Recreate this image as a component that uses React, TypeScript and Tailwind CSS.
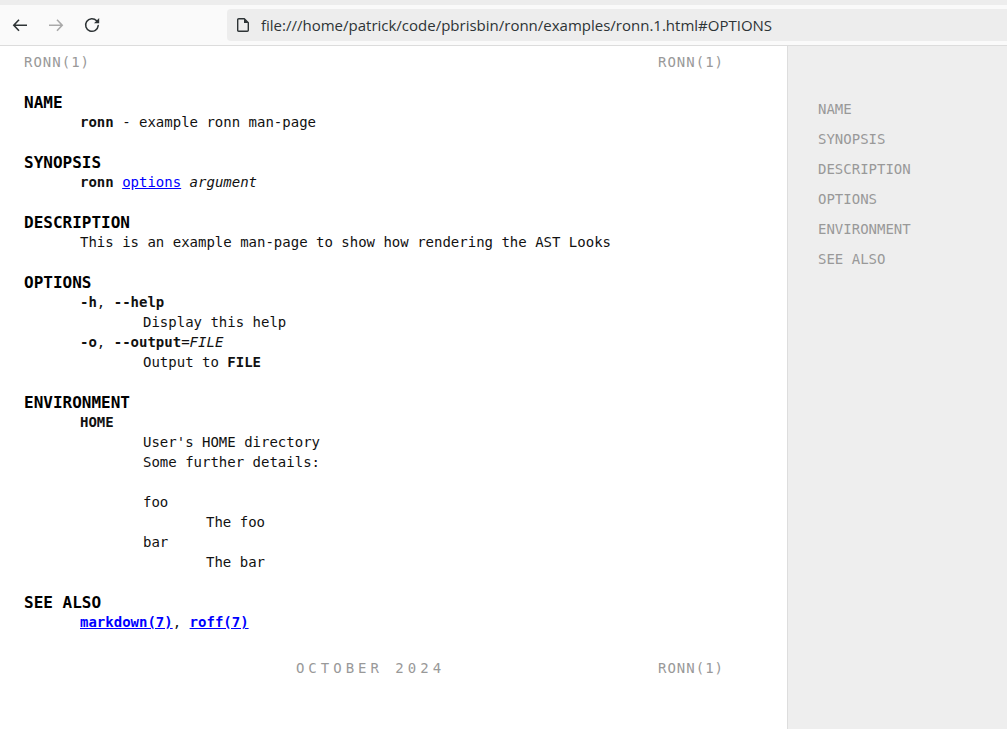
import type { ReactNode } from "react";

const sections = ["NAME", "SYNOPSIS", "DESCRIPTION", "OPTIONS", "ENVIRONMENT", "SEE ALSO"];

function anchor(name: string) {
  return name.replace(" ", "-");
}

function Section({ title, children }: { title: string; children: ReactNode }) {
  return (
    <section id={anchor(title)} className="mb-5">
      <h2 className="pt-[2px] text-[16px] font-bold leading-[18px] text-black">{title}</h2>
      <div className="pl-14">{children}</div>
    </section>
  );
}

function Toolbar() {
  return (
    <header className="shrink-0 border-b border-[#dcdcdc] bg-[#fafafa]">
      <div className="h-[5px] bg-[#ededed]" />
      <div className="flex h-10 items-center">
        <nav className="flex w-[227px] items-center gap-5 pl-3" aria-label="History">
          <button type="button" aria-label="Back" className="size-4 text-[#2e3436]">
            <svg viewBox="0 0 16 16" className="size-4" fill="none" stroke="currentColor" strokeWidth="1.6">
              <path d="M15 8.3H2M7 2.8 1.8 8.3 7 13.8" />
            </svg>
          </button>
          <button type="button" aria-label="Forward" className="size-4 text-[#a9a9a9]">
            <svg viewBox="0 0 16 16" className="size-4" fill="none" stroke="currentColor" strokeWidth="1.6">
              <path d="M1 8.3h13M9 2.8l5.2 5.5L9 13.8" />
            </svg>
          </button>
          <button type="button" aria-label="Reload" className="size-4 text-[#2e3436]">
            <svg viewBox="0 0 16 16" className="size-4" fill="none" stroke="currentColor" strokeWidth="1.5" strokeLinecap="round">
              <path d="M14.2 8.6A6.3 6.3 0 1 1 12.6 3.8" />
              <path d="M15.2 1v5.2H10z" fill="currentColor" stroke="none" />
            </svg>
          </button>
        </nav>
        <div className="flex h-8 min-w-0 flex-1 items-center gap-2.5 rounded-l bg-[#ededed] pl-2">
          <svg viewBox="0 0 16 16" className="size-4 shrink-0 text-[#2e3436]" fill="none" stroke="currentColor" strokeWidth="1.4" strokeLinejoin="round">
            <path d="M3.7 1.7h5.6l4 4v7.6q0 1-1 1H3.7q-1 0-1-1V2.7q0-1 1-1z" />
            <path d="M9 1.5V6h4.5z" fill="currentColor" stroke="none" />
          </svg>
          <input
            aria-label="Address"
            defaultValue="file:///home/patrick/code/pbrisbin/ronn/examples/ronn.1.html#OPTIONS"
            className="min-w-0 flex-1 bg-transparent font-['Open_Sans',sans-serif] text-[15px] text-[#2e3436] outline-none"
          />
        </div>
      </div>
    </header>
  );
}

export default function App() {
  return (
    <div className="flex min-h-screen flex-col bg-white font-['DejaVu_Sans_Mono',monospace] text-[14px] leading-5 text-[#111]">
      <Toolbar />
      <div className="flex flex-1">
        <main className="min-w-0 flex-1 pl-6 pr-[63px] pt-[6px]">
          <div className="mb-5 flex justify-between tracking-[1px] text-[#999]">
            <span>RONN(1)</span>
            <span>RONN(1)</span>
          </div>
          <Section title="NAME">
            <p><b>ronn</b> - example ronn man-page</p>
          </Section>
          <Section title="SYNOPSIS">
            <p><b>ronn</b> <a href="#OPTIONS" className="text-[#0000ff] underline">options</a> <i>argument</i></p>
          </Section>
          <Section title="DESCRIPTION">
            <p>This is an example man-page to show how rendering the AST Looks</p>
          </Section>
          <Section title="OPTIONS">
            <dl>
              <dt><b>-h</b>, <b>--help</b></dt>
              <dd className="pl-[63px]">Display this help</dd>
              <dt><b>-o</b>, <b>--output</b>=<i>FILE</i></dt>
              <dd className="pl-[63px]">Output to <b>FILE</b></dd>
            </dl>
          </Section>
          <Section title="ENVIRONMENT">
            <dl>
              <dt><b>HOME</b></dt>
              <dd className="pl-[63px]">
                <p>User's HOME directory</p>
                <p className="mb-5">Some further details:</p>
                <dl>
                  <dt>foo</dt>
                  <dd className="pl-[63px]">The foo</dd>
                  <dt>bar</dt>
                  <dd className="pl-[63px]">The bar</dd>
                </dl>
              </dd>
            </dl>
          </Section>
          <Section title="SEE ALSO">
            <p>
              <a href="#markdown" className="font-bold text-[#0000ff] underline">markdown(7)</a>,{" "}
              <a href="#roff" className="font-bold text-[#0000ff] underline">roff(7)</a>
            </p>
          </Section>
          <footer className="mt-[26px] grid grid-cols-[33%_33%_34%] text-[#999]">
            <span />
            <span className="text-center tracking-[4px]">OCTOBER 2024</span>
            <span className="text-right tracking-[1px]">RONN(1)</span>
          </footer>
        </main>
        <aside className="w-[220px] shrink-0 border-l border-[#dddddd] bg-[#eeeeee] pl-[30px] pt-12">
          <nav aria-label="Sections" className="flex flex-col">
            {sections.map((name) => (
              <a key={name} href={`#${anchor(name)}`} className="leading-[30px] text-[#999]">{name}</a>
            ))}
          </nav>
        </aside>
      </div>
    </div>
  );
}
